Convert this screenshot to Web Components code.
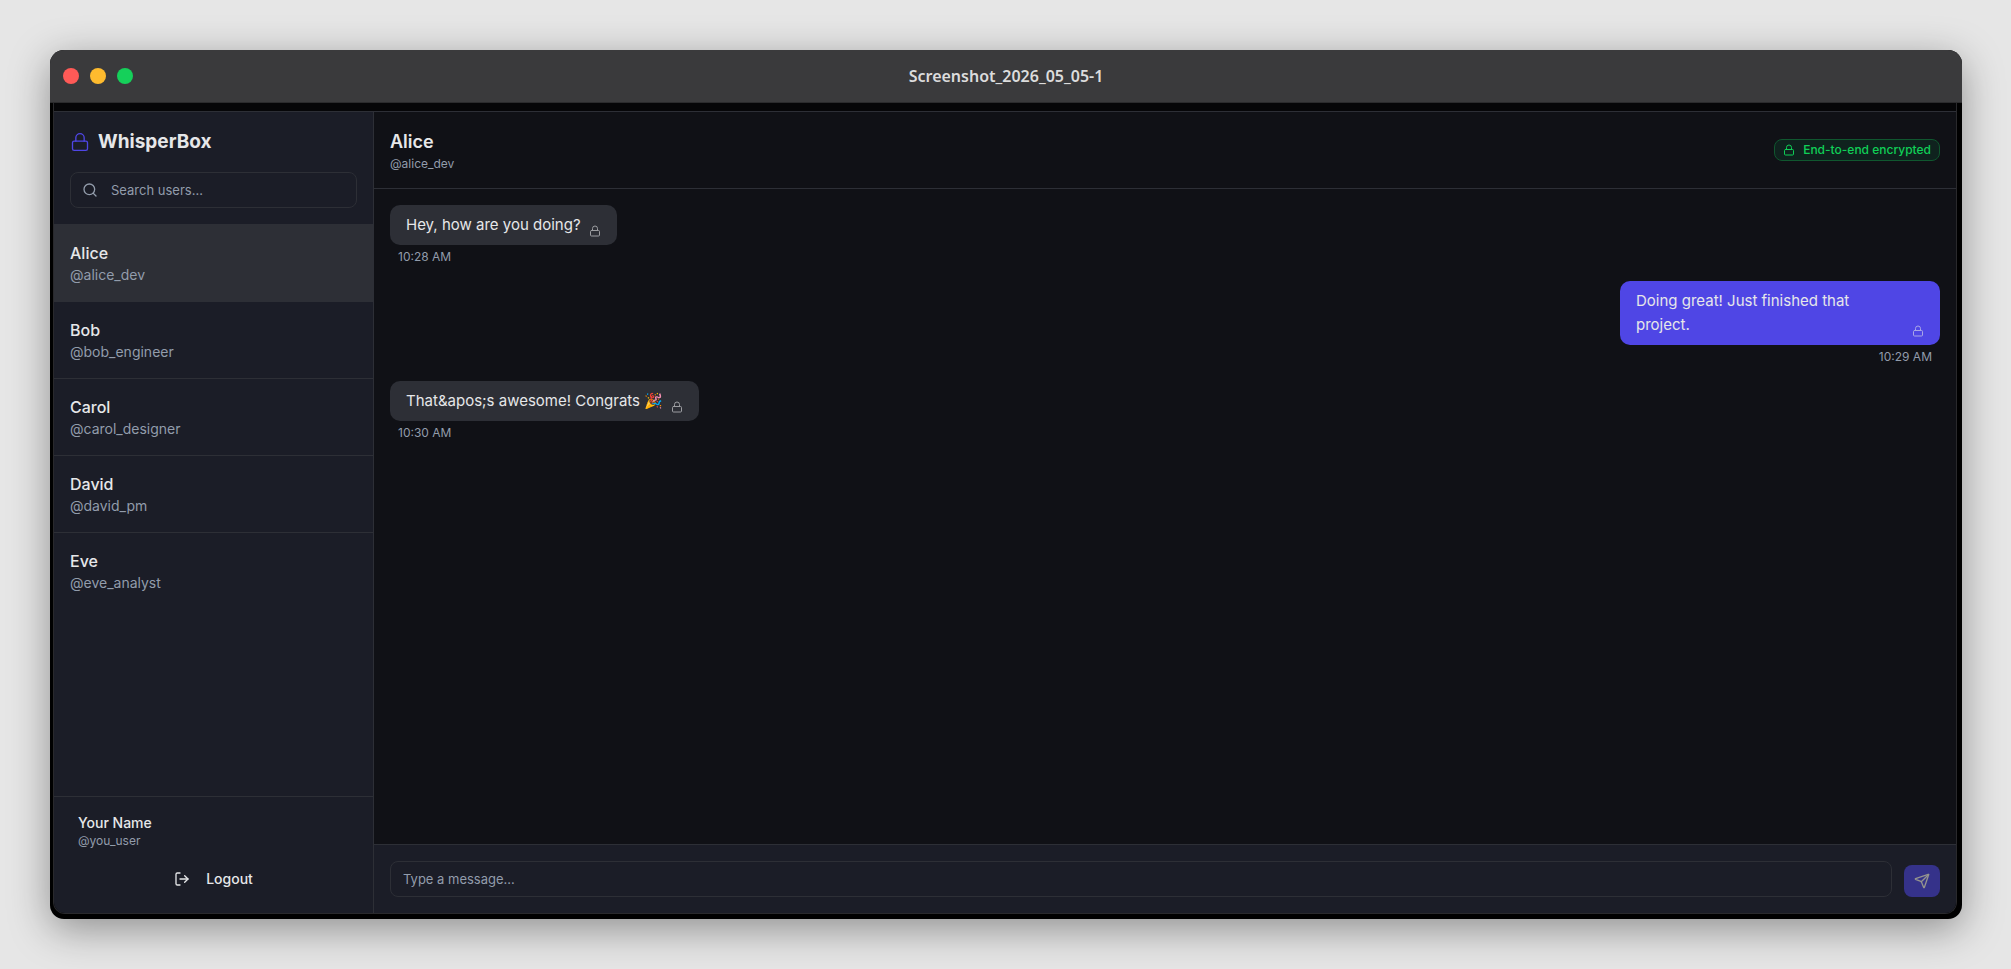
<!DOCTYPE html>
<html lang="en">
<head>
<meta charset="utf-8">
<title>WhisperBox</title>
<style>
  body {
    --bg: #101116;
    --panel: #1b1d27;
    --line: #2d2f36;
    --text: #e6e7e9;
    --muted: #929cab;
    --primary: #4f46e5;
    --green: #0fcf57;
    margin: 0;
    background: #e6e6e6;
    color: var(--text);
    font-family: Inter, "Liberation Sans", sans-serif;
    font-size: 16px;
    line-height: 24px;
  }
</style>
</head>
<body>
<desktop-window>
  <span slot="title">Screenshot_2026_05_05-1</span>
  <whisper-box></whisper-box>
</desktop-window>

<script>
const ICONS = {
  lock: '<rect width="18" height="11" x="3" y="11" rx="2"/><path d="M7 11V7a5 5 0 0 1 10 0v4"/>',
  search: '<circle cx="11" cy="11" r="8"/><path d="m21 21-4.3-4.3"/>',
  logout: '<path d="M9 21H5a2 2 0 0 1-2-2V5a2 2 0 0 1 2-2h4"/><path d="m16 17 5-5-5-5"/><path d="M21 12H9"/>',
  send: '<path d="M14.536 21.686a.5.5 0 0 0 .937-.024l6.5-19a.496.496 0 0 0-.635-.635l-19 6.5a.5.5 0 0 0-.024.937l7.93 3.18a2 2 0 0 1 1.112 1.11z"/><path d="m21.854 2.147-10.94 10.939"/>',
};

const USERS = [
  { name: 'Alice', handle: '@alice_dev' },
  { name: 'Bob', handle: '@bob_engineer' },
  { name: 'Carol', handle: '@carol_designer' },
  { name: 'David', handle: '@david_pm' },
  { name: 'Eve', handle: '@eve_analyst' },
];

const MESSAGES = [
  { text: 'Hey, how are you doing?', time: '10:28 AM' },
  { text: 'Doing great! Just finished that project.', time: '10:29 AM', own: true },
  { text: 'That&amp;apos;s awesome! Congrats 🎉', time: '10:30 AM' },
];

class BaseElement extends HTMLElement {
  constructor() {
    super();
    this.attachShadow({ mode: 'open' });
  }

  connectedCallback() {
    this.shadowRoot.innerHTML = this.template();
  }
}

class AppIcon extends BaseElement {
  template() {
    return `
      <style>
        :host { display: block; flex: none; width: var(--icon-size, 16px); height: var(--icon-size, 16px); }
        svg { display: block; width: 100%; height: 100%; stroke-width: var(--icon-stroke, 2); }
      </style>
      <svg viewBox="0 0 24 24" fill="none" stroke="currentColor"
        stroke-linecap="round" stroke-linejoin="round" aria-hidden="true">${ICONS[this.getAttribute('name')]}</svg>
    `;
  }
}

class DesktopWindow extends BaseElement {
  template() {
    return `
      <style>
        :host { display: flex; box-sizing: border-box; min-height: 100vh; padding: 50px 49px 50px 50px; }
        .window {
          flex: 1;
          display: flex;
          flex-direction: column;
          overflow: hidden;
          border-radius: 14px;
          background: #000;
          box-shadow: 0 10px 40px rgba(0, 0, 0, 0.38);
        }
        .bar {
          display: grid;
          grid-template-columns: 1fr auto 1fr;
          align-items: center;
          height: 52px;
          padding: 0 13px;
          background: #3a3a3c;
          border-bottom: 1px solid #2b2b2d;
          color: #dcdcdc;
          font: 600 16px/24px "Noto Sans", "Open Sans", sans-serif;
        }
        .lights { display: flex; gap: 11px; }
        .lights i { width: 16px; height: 16px; border-radius: 50%; background: #ff5a57; }
        .lights i:nth-child(2) { background: #febb2e; }
        .lights i:nth-child(3) { background: #15d05a; }
        .screen { flex: 1; display: flex; padding: 0 5px 5px 3px; }
      </style>
      <section class="window">
        <div class="bar">
          <div class="lights"><i></i><i></i><i></i></div>
          <slot name="title"></slot>
        </div>
        <div class="screen"><slot></slot></div>
      </section>
    `;
  }
}

class UserItem extends BaseElement {
  template() {
    return `
      <style>
        :host { display: block; border-bottom: 1px solid var(--line); }
        :host(:last-child) { border-bottom: 0; }
        :host([selected]) { background: var(--line); }
        button {
          display: flex;
          flex-direction: column;
          width: 100%;
          padding: 16px;
          border: 0;
          background: none;
          color: inherit;
          font: inherit;
          text-align: left;
        }
        .name { font-weight: 500; }
        .handle { color: var(--muted); font-size: 14px; line-height: 20px; }
      </style>
      <button type="button">
        <span class="name"><slot></slot></span>
        <span class="handle"><slot name="handle"></slot></span>
      </button>
    `;
  }
}

class SideBar extends BaseElement {
  template() {
    return `
      <style>
        :host {
          display: flex;
          flex-direction: column;
          box-sizing: border-box;
          flex: none;
          width: 320px;
          background: var(--panel);
          border-right: 1px solid var(--line);
        }
        header { padding: 16px; border-bottom: 1px solid var(--line); }
        .brand { display: flex; align-items: center; gap: 8px; margin-bottom: 16px; }
        .brand app-icon { --icon-size: 20px; --icon-stroke: 1.6; color: var(--primary); }
        h1 { margin: 0; font-size: 19px; line-height: 28px; font-weight: 700; }
        .search {
          display: flex;
          align-items: center;
          gap: 13px;
          box-sizing: border-box;
          height: 36px;
          padding: 0 11px;
          border: 1px solid var(--line);
          border-radius: 8px;
          color: var(--muted);
        }
        input {
          flex: 1;
          min-width: 0;
          padding: 0;
          border: 0;
          outline: 0;
          background: none;
          color: var(--text);
          font: inherit;
          font-size: 13px;
        }
        input::placeholder { color: var(--muted); opacity: 1; }
        nav { flex: 1; }
        footer { padding: 16px; border-top: 1px solid var(--line); }
        .me { padding: 0 8px; margin-bottom: 12px; }
        .me p { margin: 0; font-size: 14px; line-height: 20px; font-weight: 500; }
        .me p + p { color: var(--muted); font-size: 12px; line-height: 16px; font-weight: 400; }
        .logout {
          display: flex;
          align-items: center;
          justify-content: center;
          gap: 16px;
          width: 100%;
          height: 36px;
          padding: 0;
          border: 0;
          background: none;
          color: inherit;
          font: inherit;
          font-size: 14px;
          font-weight: 500;
        }
      </style>
      <header>
        <div class="brand"><app-icon name="lock"></app-icon><h1>WhisperBox</h1></div>
        <label class="search">
          <app-icon name="search"></app-icon>
          <input type="text" placeholder="Search users..." aria-label="Search users">
        </label>
      </header>
      <nav>
        ${USERS.map((user, i) => `<user-item ${i === 0 ? 'selected' : ''}>${user.name}<span slot="handle">${user.handle}</span></user-item>`).join('')}
      </nav>
      <footer>
        <div class="me"><p>Your Name</p><p>@you_user</p></div>
        <button class="logout" type="button"><app-icon name="logout"></app-icon>Logout</button>
      </footer>
    `;
  }
}

class ChatMessage extends BaseElement {
  template() {
    return `
      <style>
        :host { display: flex; flex-direction: column; align-items: flex-start; }
        :host([own]) { align-items: flex-end; }
        .bubble {
          display: flex;
          align-items: flex-end;
          gap: 8px;
          box-sizing: border-box;
          max-width: 320px;
          padding: 8px 16px;
          border-radius: 10px;
          background: var(--line);
          font-size: 15px;
        }
        :host([own]) .bubble { background: var(--primary); }
        p { flex: 1; margin: 0; }
        app-icon { --icon-size: 12px; opacity: 0.6; }
        time { margin-top: 4px; padding: 0 8px; color: var(--muted); font-size: 12px; line-height: 16px; }
      </style>
      <div class="bubble"><p><slot></slot></p><app-icon name="lock"></app-icon></div>
      <time><slot name="time"></slot></time>
    `;
  }
}

class ChatPanel extends BaseElement {
  template() {
    return `
      <style>
        :host { display: flex; flex-direction: column; flex: 1; min-width: 0; background: var(--bg); }
        header {
          display: flex;
          align-items: center;
          justify-content: space-between;
          padding: 16px;
          border-bottom: 1px solid var(--line);
        }
        h2 { margin: 0; font-size: 18px; line-height: 28px; font-weight: 600; }
        header p { margin: 0; color: var(--muted); font-size: 12px; line-height: 16px; }
        .badge {
          display: flex;
          align-items: center;
          gap: 8px;
          padding: 2px 8px;
          border: 1px solid #10572f;
          border-radius: 8px;
          background: #0f221e;
          color: var(--green);
          font-size: 12px;
          line-height: 16px;
          font-weight: 500;
        }
        .badge app-icon { --icon-size: 12px; }
        .messages { flex: 1; display: flex; flex-direction: column; gap: 16px; padding: 16px; }
        form {
          display: flex;
          align-items: flex-end;
          gap: 12px;
          padding: 16px;
          background: var(--panel);
          border-top: 1px solid var(--line);
        }
        input {
          flex: 1;
          box-sizing: border-box;
          min-width: 0;
          height: 36px;
          padding: 0 12px;
          border: 1px solid var(--line);
          border-radius: 8px;
          outline: 0;
          background: none;
          color: var(--text);
          font: inherit;
          font-size: 13px;
        }
        input::placeholder { color: var(--muted); opacity: 1; }
        button {
          display: flex;
          align-items: center;
          justify-content: center;
          width: 36px;
          height: 32px;
          padding: 0;
          border: 0;
          border-radius: 8px;
          background: #35328a;
          color: #94938f;
        }
      </style>
      <header>
        <div><h2>Alice</h2><p>@alice_dev</p></div>
        <div class="badge"><app-icon name="lock"></app-icon>End-to-end encrypted</div>
      </header>
      <div class="messages">
        ${MESSAGES.map((msg) => `<chat-message ${msg.own ? 'own' : ''}>${msg.text}<span slot="time">${msg.time}</span></chat-message>`).join('')}
      </div>
      <form>
        <input type="text" placeholder="Type a message..." aria-label="Message">
        <button type="submit" aria-label="Send" disabled><app-icon name="send"></app-icon></button>
      </form>
    `;
  }
}

class WhisperBox extends BaseElement {
  template() {
    return `
      <style>
        :host {
          flex: 1;
          display: flex;
          flex-direction: column;
          overflow: hidden;
          border: 1px solid #29292c;
          border-top: 0;
          border-radius: 0 0 12px 12px;
        }
        .edge { height: 8px; background: #060608; border-bottom: 1px solid var(--line); }
        main { flex: 1; display: flex; }
      </style>
      <div class="edge"></div>
      <main><side-bar></side-bar><chat-panel></chat-panel></main>
    `;
  }
}

customElements.define('app-icon', AppIcon);
customElements.define('user-item', UserItem);
customElements.define('side-bar', SideBar);
customElements.define('chat-message', ChatMessage);
customElements.define('chat-panel', ChatPanel);
customElements.define('whisper-box', WhisperBox);
customElements.define('desktop-window', DesktopWindow);
</script>
</body>
</html>
